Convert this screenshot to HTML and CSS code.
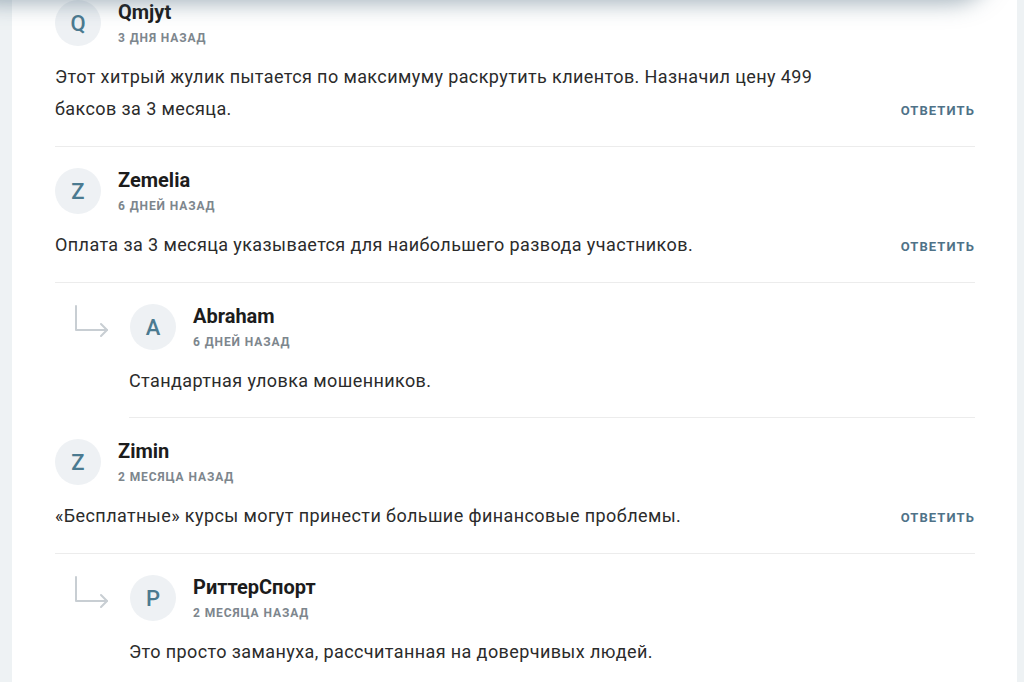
FILE: index.html
```html
<!DOCTYPE html>
<html lang="ru">
<head>
<meta charset="utf-8">
<title>Комментарии</title>
<link rel="stylesheet" href="styles.css">
</head>
<body>
<div class="page">
  <div class="header-shadow"></div>
  <section class="card">
    <div class="list">
      <article class="comment">
        <div class="head">
          <div class="avatar">Q</div>
          <div class="meta">
            <div class="name">Qmjyt</div>
            <div class="date">3 дня назад</div>
          </div>
        </div>
        <div class="row">
          <p class="text">Этот хитрый жулик пытается по максимуму раскрутить клиентов. Назначил цену 499 баксов за 3 месяца.</p>
          <a class="answer" href="#">Ответить</a>
        </div>
      </article>

      <article class="comment">
        <div class="head">
          <div class="avatar">Z</div>
          <div class="meta">
            <div class="name">Zemelia</div>
            <div class="date">6 дней назад</div>
          </div>
        </div>
        <div class="row">
          <p class="text">Оплата за 3 месяца указывается для наибольшего развода участников.</p>
          <a class="answer" href="#">Ответить</a>
        </div>
      </article>

      <div class="reply">
        <div class="reply-arrow">
          <svg width="40" height="36" viewBox="0 0 40 36" fill="none" stroke="#c8ced3" stroke-width="2" stroke-linecap="round" stroke-linejoin="round"><path d="M4 3 V27 H35"/><path d="M29 21 L35 27 L29 33"/></svg>
        </div>
        <article class="comment">
          <div class="head">
            <div class="avatar">A</div>
            <div class="meta">
              <div class="name">Abraham</div>
              <div class="date">6 дней назад</div>
            </div>
          </div>
          <div class="row">
            <p class="text">Стандартная уловка мошенников.</p>
          </div>
        </article>
      </div>

      <article class="comment">
        <div class="head">
          <div class="avatar">Z</div>
          <div class="meta">
            <div class="name">Zimin</div>
            <div class="date">2 месяца назад</div>
          </div>
        </div>
        <div class="row">
          <p class="text">«Бесплатные» курсы могут принести большие финансовые проблемы.</p>
          <a class="answer" href="#">Ответить</a>
        </div>
      </article>

      <div class="reply">
        <div class="reply-arrow">
          <svg width="40" height="36" viewBox="0 0 40 36" fill="none" stroke="#c8ced3" stroke-width="2" stroke-linecap="round" stroke-linejoin="round"><path d="M4 3 V27 H35"/><path d="M29 21 L35 27 L29 33"/></svg>
        </div>
        <article class="comment">
          <div class="head">
            <div class="avatar">P</div>
            <div class="meta">
              <div class="name">РиттерСпорт</div>
              <div class="date">2 месяца назад</div>
            </div>
          </div>
          <div class="row">
            <p class="text">Это просто замануха, рассчитанная на доверчивых людей.</p>
          </div>
        </article>
      </div>
    </div>
  </section>
</div>
</body>
</html>
```

FILE: styles.css
```css
* { box-sizing: border-box; }
html, body { margin: 0; padding: 0; }
body {
  background: #eef2f4;
  font-family: Roboto, "Liberation Sans", Arial, sans-serif;
  color: #2b2b2b;
  overflow: hidden;
  height: 682px;
}
.page {
  position: relative;
  height: 682px;
  padding: 0 7px 0 12px;
  overflow: hidden;
}
.header-shadow {
  position: absolute;
  top: -60px;
  left: -20px;
  width: 1012px;
  height: 60px;
  border-radius: 0 0 40px 0;
  background: #d3dde3;
  box-shadow: 0 3px 22px rgba(70, 100, 120, 0.5);
  z-index: 2;
}
.card {
  display: flow-root;
  background: #fff;
  height: 100%;
  padding: 0 42px 0 43px;
}
.list {
  margin-top: -21px;
}
.comment {
  padding: 21px 0;
  border-bottom: 1px solid #ececec;
}
.head {
  display: flex;
  align-items: flex-start;
  gap: 17px;
}
.avatar {
  width: 46px;
  height: 46px;
  border-radius: 50%;
  background: #eef1f4;
  color: #4b7a90;
  font-size: 22px;
  font-weight: 500;
  display: flex;
  align-items: center;
  justify-content: center;
  flex: none;
}
.meta {
  padding-top: 1px;
}
.name {
  font-size: 20px;
  font-weight: 700;
  line-height: 22px;
  color: #1c1c1c;
}
.date {
  margin-top: 8px;
  font-size: 12px;
  line-height: 15px;
  font-weight: 700;
  text-transform: uppercase;
  letter-spacing: 0.9px;
  color: #7d868d;
}
.row {
  display: flex;
  align-items: flex-end;
  gap: 48px;
  margin-top: 15px;
}
.text {
  flex: 1;
  margin: 0;
  font-size: 18px;
  line-height: 32px;
  letter-spacing: 0.4px;
  color: #2b2b2b;
}
.answer {
  flex: none;
  font-size: 13px;
  line-height: 28px;
  font-weight: 700;
  text-transform: uppercase;
  letter-spacing: 1.1px;
  color: #4f7288;
  text-decoration: none;
}
.reply {
  display: flex;
}
.reply-arrow {
  width: 74px;
  flex: none;
  padding: 20px 0 0 17px;
}
.reply .comment {
  flex: 1;
  padding-bottom: 20px;
}
.reply .avatar {
  margin-left: 1px;
}
```
